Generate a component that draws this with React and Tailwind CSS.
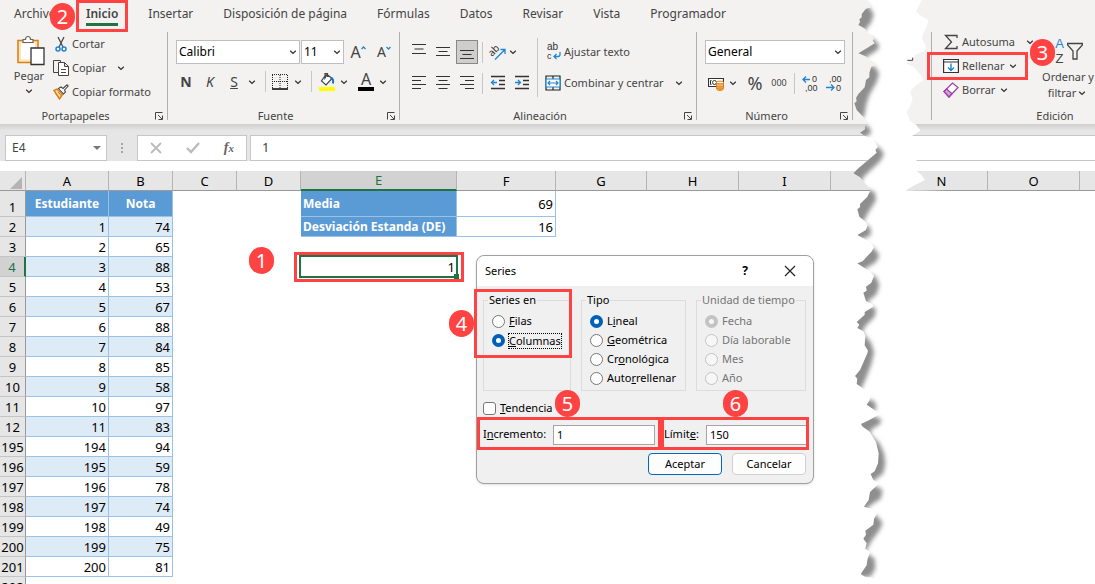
import React from "react";

const tabs = [
  "Archivo",
  "Inicio",
  "Insertar",
  "Disposición de página",
  "Fórmulas",
  "Datos",
  "Revisar",
  "Vista",
  "Programador",
];

const rows = [
  [1, null, null],
  [2, 1, 74],
  [3, 2, 65],
  [4, 3, 88],
  [5, 4, 53],
  [6, 5, 67],
  [7, 6, 88],
  [8, 7, 84],
  [9, 8, 85],
  [10, 9, 58],
  [11, 10, 97],
  [12, 11, 83],
  [195, 194, 94],
  [196, 195, 59],
  [197, 196, 78],
  [198, 197, 74],
  [199, 198, 49],
  [200, 199, 75],
  [201, 200, 81],
];

const Chevron = ({ className = "" }) => (
  <svg className={`w-3 h-3 shrink-0 ${className}`} viewBox="0 0 12 12" fill="none" stroke="#333" strokeWidth="1.3">
    <path d="M3.2 4.8 6 7.4 8.8 4.8" />
  </svg>
);

const Badge = ({ n, className }) => (
  <span
    className={`absolute z-20 flex items-center justify-center w-[25px] h-[27px] rounded-full bg-[#ff4343] text-white text-xl leading-none font-normal ${className}`}
  >
    {n}
  </span>
);

const Sep = ({ className = "" }) => <span className={`w-px h-[21px] shrink-0 bg-[#c8c6c4] ${className}`} />;

const GroupLine = () => <div className="w-px h-[88px] shrink-0 bg-[#b1afad]" />;

const Group = ({ title, className = "", launcher = true, children }) => (
  <section className={`flex flex-col h-[92px] shrink-0 text-[11px] ${className}`}>
    <div className="flex-1">{children}</div>
    <div className="flex items-center h-4">
      <span className="flex-1 text-center">{title}</span>
      {launcher && (
        <button aria-label={title} className="w-4 h-4 shrink-0">
          <svg viewBox="0 0 16 16" className="w-4 h-4" fill="none" stroke="#444" strokeWidth="1">
            <path d="M4.5 11.5v-7h7M7 7l4 4M11.5 7.5v4h-4" />
          </svg>
        </button>
      )}
    </div>
  </section>
);

const Combo = ({ label, value, className }) => (
  <label className={`relative block h-6 bg-white border border-[#c0bebc] text-xs text-black ${className}`}>
    <select aria-label={label} className="appearance-none w-full h-full pl-0.5 bg-transparent outline-none">
      <option>{value}</option>
    </select>
    <Chevron className="absolute right-0 top-[5px] pointer-events-none" />
  </label>
);

// the widths of the lines decide the alignment
const Lines = ({ d }) => (
  <svg className="w-4 h-4" viewBox="0 0 16 16" stroke="#333" strokeWidth="1.2" fill="none">
    <path d={d} />
  </svg>
);

const IconBtn = ({ label, className = "", children }) => (
  <button aria-label={label} className={`flex items-center justify-center w-[22px] h-6 shrink-0 ${className}`}>
    {children}
  </button>
);

const Clipboard = () => (
  <div className="flex">
    <button className="flex flex-col items-center w-8 ml-[13px] pt-[3px]">
      <svg className="w-8 h-8 shrink-0" viewBox="0 0 32 32" fill="none">
        <path d="M5 5.500h20v22H5z" fill="#fbe7b8" stroke="#e07b10" strokeWidth="1.500" />
        <path d="M8 8.500h14v16H8z" fill="#fff" />
        <path d="M10 7.500V4.500h2.500c0-4 5-4 5 0H20v3z" fill="#fff" stroke="#666" strokeWidth="1.200" />
        <path d="M18 13h13v16.500H18z" fill="#fff" stroke="#333" strokeWidth="1.300" />
      </svg>
      <span className="leading-4 mt-px">Pegar</span>
      <Chevron className="mt-px" />
    </button>
    <div className="flex flex-col ml-2">
      <button className="flex items-center gap-[3px] h-6">
        <svg className="w-4 h-4" viewBox="0 0 16 16" fill="none" strokeWidth="1.200">
          <path d="M5 1 10 11M11 1 6 11" stroke="#444" />
          <circle cx="5" cy="13" r="2" stroke="#1f85d0" strokeWidth="1.500" />
          <circle cx="11" cy="13" r="2" stroke="#1f85d0" strokeWidth="1.500" />
        </svg>
        Cortar
      </button>
      <button className="flex items-center gap-[3px] h-6">
        <svg className="w-4 h-4" viewBox="0 0 16 16" fill="none" stroke="#444">
          <path d="M5.500 12.500h-5V.5h7v2" />
          <path d="M5.500 2.500h6l4 4v9h-10zM11.500 2.500v4h4M8 9.500h5M8 12.500h5" fill="#fff" />
        </svg>
        Copiar
        <Chevron className="ml-1.5" />
      </button>
      <button className="flex items-center gap-[3px] h-6 whitespace-nowrap">
        <svg className="w-4 h-4" viewBox="0 0 16 16" fill="none">
          <path d="M1 6.500 4 5l5.500 5.500L6.500 15z" fill="#fcd9a0" stroke="#e07b10" strokeWidth="1.400" />
          <path d="M2.500 9.500 6 14M5 8l3.500 4" stroke="#e07b10" />
          <path d="M5.500 4.500 8 3l2 1.500L14 .8 15.200 2 11.500 6l1 2-2 2z" fill="#fff" stroke="#444" strokeWidth="1.100" />
        </svg>
        Copiar formato
      </button>
    </div>
  </div>
);

const FontGroup = () => (
  <>
    <div className="flex items-center pl-2 pt-2">
      <Combo label="Fuente" value="Calibri" className="w-[124px]" />
      <Combo label="Tamaño" value="11" className="w-[43px] ml-px" />
      <IconBtn label="Aumentar tamaño" className="ml-[3px]">
        <span className="text-base leading-5">A</span>
        <svg className="w-[5px] h-3 mb-2 shrink-0" viewBox="0 0 5 12" fill="none" stroke="#1f85d0" strokeWidth="1.300">
          <path d="M.5 7 2.500 5l2 2" />
        </svg>
      </IconBtn>
      <IconBtn label="Reducir tamaño" className="ml-1">
        <span className="text-sm leading-5">A</span>
        <svg className="w-[5px] h-3 mb-2 shrink-0" viewBox="0 0 5 12" fill="none" stroke="#1f85d0" strokeWidth="1.300">
          <path d="M.5 5l2 2 2-2" />
        </svg>
      </IconBtn>
    </div>
    <div className="flex items-center mt-[7px] pl-1.5 text-sm">
      <button className="w-6 font-bold">N</button>
      <button className="w-6 italic">K</button>
      <button className="w-6 underline">S</button>
      <Chevron />
      <Sep className="ml-[7px]" />
      <button aria-label="Bordes" className="ml-1.5">
        <svg className="w-4 h-4" viewBox="0 0 16 16" fill="none" stroke="#222">
          <path d="M.5 1v13M15.500 1v13M0 .5h16M8 1v13M0 7.500h16" strokeDasharray="1 1" />
          <path d="M0 15h16" stroke="#000" strokeWidth="1.500" />
        </svg>
      </button>
      <Chevron className="ml-1" />
      <Sep className="ml-[7px]" />
      <button aria-label="Color de relleno" className="ml-[7px]">
        <svg className="w-4 h-5" viewBox="0 0 16 20" fill="none">
          <path d="M7 2.500 2.500 9 7 13l6-6.500L8 2.500 6 6V1.500h2.500V5" stroke="#444" strokeWidth="1.200" fill="#fff" />
          <path d="M11 5.500c3 0 3.500 3 3 6" stroke="#1f75b8" strokeWidth="2" />
          <path d="M0 15h16v4H0z" fill="#ff0" />
        </svg>
      </button>
      <Chevron className="ml-[3px]" />
      <button aria-label="Color de fuente" className="flex flex-col items-center w-4 h-5 ml-2 text-base leading-[15px]">
        A
        <span className="w-4 h-1 bg-black" />
      </button>
      <Chevron className="ml-[3px]" />
    </div>
  </>
);

const AlignGroup = () => (
  <div className="flex">
    <div className="w-[137px] pt-2">
      <div className="flex items-center pl-2">
        <div className="flex gap-0.5">
          <IconBtn label="Arriba"><Lines d="M1 .5h14M3.500 5h9M1 9.500h14" /></IconBtn>
          <IconBtn label="Medio"><Lines d="M1 3.500h14M3.500 7.500h9M1 11.500h14" /></IconBtn>
          <IconBtn label="Abajo" className="bg-[#d0cecc] border border-[#8a8886]">
            <Lines d="M1 6.500h14M3.500 10.500h9M1 14.500h14" />
          </IconBtn>
        </div>
        <Sep className="ml-1" />
        <button aria-label="Orientación" className="ml-[7px]">
          <svg className="w-4 h-4 overflow-visible" viewBox="0 0 16 16" fill="none">
            <text x="-1" y="10" transform="rotate(-45 4 8)" fontSize="10" fill="#333">ab</text>
            <path d="M5 15.500 15 5.500M10.500 5.500H15V10" stroke="#1f85d0" strokeWidth="1.300" />
          </svg>
        </button>
        <Chevron className="ml-px" />
      </div>
      <div className="flex items-center mt-[7px] pl-2">
        <div className="flex gap-0.5">
          <IconBtn label="Izquierda"><Lines d="M1 1.500h14M1 5.500h9M1 9.500h14M1 13.500h9" /></IconBtn>
          <IconBtn label="Centro"><Lines d="M1 1.500h14M3.500 5.500h9M1 9.500h14M3.500 13.500h9" /></IconBtn>
          <IconBtn label="Derecha"><Lines d="M1 1.500h14M6 5.500h9M1 9.500h14M6 13.500h9" /></IconBtn>
        </div>
        <Sep className="ml-1" />
        <div className="flex gap-0.5 ml-1">
          <IconBtn label="Reducir sangría">
            <svg className="w-4 h-4" viewBox="0 0 16 16" fill="none" strokeWidth="1.300">
              <path d="M1 1.500h14M9 5.500h6M9 9.500h6M1 13.500h14" stroke="#333" />
              <path d="M7 7.500H1.500M4 5 1.500 7.500 4 10" stroke="#1f85d0" />
            </svg>
          </IconBtn>
          <IconBtn label="Aumentar sangría">
            <svg className="w-4 h-4" viewBox="0 0 16 16" fill="none" strokeWidth="1.300">
              <path d="M1 1.500h14M9 5.500h6M9 9.500h6M1 13.500h14" stroke="#333" />
              <path d="M1 7.500h5.500M4 5l2.500 2.500L4 10" stroke="#1f85d0" />
            </svg>
          </IconBtn>
        </div>
      </div>
    </div>
    <span className="w-px h-[59px] mt-1.5 bg-[#c8c6c4]" />
    <div className="flex flex-col items-start gap-[7px] pl-[7px] pt-2">
      <button className="flex items-center gap-[3px] h-6">
        <svg className="w-4 h-5 font-['Liberation_Sans']" viewBox="0 0 16 20" fill="none">
          <text x="2" y="8" fontSize="10" fill="#333">ab</text>
          <text x="2" y="17" fontSize="9" fill="#333">c</text>
          <path d="M15 10v2.500c0 1.500-1 2-2 2H9M11.500 12 9 14.500l2.500 2.500" stroke="#1f85d0" strokeWidth="1.300" />
        </svg>
        Ajustar texto
      </button>
      <button className="flex items-center gap-[3px] h-6">
        <svg className="w-4 h-4" viewBox="0 0 16 16" fill="none">
          <path d="M1 1h14v14H1zM8 1v3M8 12v3" stroke="#222" strokeWidth="1.200" />
          <path d="M1 4h14v8H1z" fill="#fff" stroke="#1f85d0" strokeWidth="1.200" />
          <path d="M3 8h10M5 6 3 8l2 2M11 6l2 2-2 2" stroke="#1f85d0" strokeWidth="1.200" />
        </svg>
        Combinar y centrar
        <Chevron className="ml-1.5" />
      </button>
    </div>
  </div>
);

const NumberGroup = () => (
  <>
    <div className="pl-2 pt-2">
      <Combo label="Formato de número" value="General" className="w-[140px]" />
    </div>
    <div className="flex items-center mt-[7px] pl-[11px]">
      <button aria-label="Moneda">
        <svg className="w-4 h-4" viewBox="0 0 16 16" fill="none">
          <path d="M.5 3.500h15v8H.5z" stroke="#333" strokeWidth="1.200" fill="#fff" />
          <circle cx="6.500" cy="7.500" r="2" stroke="#333" />
          <path d="M3.500 5.500h-1v4h1" stroke="#333" />
          <path d="M8.500 7.500v6c0 2.500 7 2.500 7 0v-6z" fill="#f6b26b" stroke="#e07b10" />
          <ellipse cx="12" cy="7.500" rx="3.500" ry="1.400" fill="#fff" stroke="#e07b10" />
          <path d="M8.500 10.500c0 2 7 2 7 0M8.500 12.500c0 2 7 2 7 0" stroke="#e07b10" />
        </svg>
      </button>
      <Chevron className="ml-[3px]" />
      <button className="w-4 ml-2 flex justify-center text-lg leading-6">%</button>
      <button className="w-4 ml-2 flex justify-center text-[9px]">000</button>
      <Sep className="ml-[7px]" />
      <button aria-label="Aumentar decimales" className="ml-[7px]">
        <svg className="w-4 h-5 font-['Liberation_Sans']" viewBox="0 0 16 20" fill="none">
          <text x="10" y="9" fontSize="9" fill="#333">0</text>
          <text x="3" y="18" fontSize="9" fill="#333">,00</text>
          <path d="M8 6.500H1M4 3.500l-3 3 3 3" stroke="#1f85d0" strokeWidth="1.300" />
        </svg>
      </button>
      <button aria-label="Disminuir decimales" className="ml-2">
        <svg className="w-4 h-5 font-['Liberation_Sans']" viewBox="0 0 16 20" fill="none">
          <text x="3" y="9" fontSize="9" fill="#333">,00</text>
          <text x="10" y="18" fontSize="9" fill="#333">0</text>
          <path d="M0 14.500h8M5 11.500l3 3-3 3" stroke="#1f85d0" strokeWidth="1.300" />
        </svg>
      </button>
    </div>
  </>
);

const EditGroup = () => (
  <div className="relative flex">
    <div className="w-[108px] shrink-0">
      <button className="flex items-center gap-[3px] h-5 ml-[11px]">
        <svg className="w-4 h-4" viewBox="0 0 16 16" fill="none" stroke="#444" strokeWidth="1.300">
          <path d="M14 4V1.500H2.500L8.500 8l-6 6.500H14V12" />
        </svg>
        Autosuma
        <Chevron className="ml-1.5" />
      </button>
      <div className="relative">
        <button className="flex items-center gap-[3px] h-7 ml-[11px]">
          <svg className="w-4 h-4" viewBox="0 0 16 16" fill="none">
            <path d="M.6 1.500h14.800v13H.6zM.6 4h14.800" stroke="#333" strokeWidth="1.200" fill="#fff" />
            <path d="M8 5.500v7M5 9.500l3 3 3-3" stroke="#1f85d0" strokeWidth="1.400" />
          </svg>
          Rellenar
          <Chevron />
        </button>
        <span className="absolute -left-[5px] top-0 w-[101px] h-7 border-3 border-[#ff4343]" />
      </div>
      <button className="flex items-center gap-[3px] h-5 ml-[11px]">
        <svg className="w-4 h-4" viewBox="0 0 16 16" fill="none" stroke="#9b3fa5" strokeWidth="1.200">
          <path d="M1 9.500 9.500 1 15 5.500 6 15z" fill="#fff" />
          <path d="M1 9.500 3.500 7 9 11.500 6 15z" fill="#d79be0" />
        </svg>
        Borrar
        <Chevron />
      </button>
    </div>
    <button className="flex flex-col items-center w-14 pt-1">
      <span className="flex items-center h-[30px]">
        <span className="flex flex-col items-center w-3 text-[13px] leading-[15px] font-['Liberation_Sans']">
          <span className="text-[#1f85d0]">A</span>
          <span>Z</span>
        </span>
        <svg className="w-4 h-[30px] ml-px" viewBox="0 0 16 30" fill="none" stroke="#444" strokeWidth="1.300">
          <path d="M.6 7.500h14.800V9L10 15v8H6v-8L.6 9z" />
        </svg>
      </span>
      <span className="mt-[3px] leading-4 whitespace-nowrap">Ordenar y</span>
      <span className="flex items-center leading-4">
        filtrar
        <Chevron />
      </span>
    </button>
    <Badge n="3" className="left-[98px] top-[7px]" />
  </div>
);

const Ribbon = () => (
  <header className="bg-[#f3f2f1]">
    <nav className="relative flex gap-[30px] h-8 pl-[14px] pt-1 whitespace-nowrap">
      {tabs.map((t) => (
        <a
          key={t}
          href="#"
          className={`relative h-[22px] leading-5 ${t === "Inicio" ? "font-semibold border-b-3 border-[#217346]" : ""}`}
        >
          {t}
          {t === "Inicio" && (
            <span className="absolute -inset-x-[10px] -top-1 h-8 border-3 border-[#ff4343]" />
          )}
        </a>
      ))}
      <Badge n="2" className="left-[50px] top-[3px]" />
    </nav>
    <div className="flex items-start overflow-hidden">
      <Group title="Portapapeles" className="w-[167px]"><Clipboard /></Group>
      <GroupLine />
      <Group title="Fuente" className="w-[231px]"><FontGroup /></Group>
      <GroupLine />
      <Group title="Alineación" className="w-[296px]"><AlignGroup /></Group>
      <GroupLine />
      <Group title="Número" className="w-[155px]"><NumberGroup /></Group>
      <GroupLine />
      <div className="w-[78px] shrink-0" />
      <GroupLine />
      <Group title="Edición" className="w-[246px]" launcher={false}><EditGroup /></Group>
    </div>
  </header>
);

const FormulaBar = () => (
  <div className="bg-[#e6e6e6]">
    <div className="h-[11px] bg-linear-to-b from-[#cfcfcf] to-[#e6e6e6] to-60%" />
    <div className="flex items-stretch h-[26px] mb-[10px] pl-[5px]">
      <label className="flex items-center w-[102px] bg-white border border-[#c6c6c6] pl-1.5 pr-[5px]">
        <input aria-label="Cuadro de nombres" defaultValue="E4" className="w-full min-w-0 outline-none bg-transparent" />
        <svg className="w-2 h-2 shrink-0" viewBox="0 0 8 8"><path d="M0 2h8L4 6z" fill="#777" /></svg>
      </label>
      <div className="flex flex-col items-center justify-center gap-0.5 w-[30px]">
        <i className="w-0.5 h-0.5 bg-[#a6a6a6]" />
        <i className="w-0.5 h-0.5 bg-[#a6a6a6]" />
        <i className="w-0.5 h-0.5 bg-[#a6a6a6]" />
      </div>
      <div className="flex items-center justify-around w-[110px] bg-white border border-[#c6c6c6]">
        <button aria-label="Cancelar entrada">
          <svg className="w-3 h-3" viewBox="0 0 12 12" stroke="#bbb" strokeWidth="1.800"><path d="m1 1 10 10M11 1 1 11" /></svg>
        </button>
        <button aria-label="Introducir">
          <svg className="w-[14px] h-3" viewBox="0 0 14 12" fill="none" stroke="#bbb" strokeWidth="2.400"><path d="m1 6 4 4 8-9" /></svg>
        </button>
        <button aria-label="Insertar función" className="font-['Liberation_Serif'] italic font-bold text-sm leading-5 text-[#666]">
          f<span className="text-[11px]">x</span>
        </button>
      </div>
      <input
        aria-label="Barra de fórmulas"
        defaultValue="1"
        className="flex-1 min-w-0 ml-[3px] pl-[11px] bg-white border border-r-0 border-[#c6c6c6] text-[13px] outline-none"
      />
    </div>
  </div>
);

const colHead = "p-0 border-r border-b border-r-[#b4b4b4] border-b-[#999] font-normal text-center";
const blueHead = "p-0 bg-[#5b9bd5] border-r border-b border-[#9bc2e6] text-xs leading-4 text-white font-bold";

const Sheet = () => (
  <table className="w-full table-fixed border-separate border-spacing-0 text-[13px] leading-4 text-black">
    <colgroup>
      <col className="w-[26px]" />
      <col className="w-[83px]" />
      <col className="w-16" />
      <col className="w-16" />
      <col className="w-16" />
      <col className="w-[156px]" />
      <col className="w-[99px]" />
      <col className="w-[91px]" />
      <col className="w-[92px]" />
      <col className="w-[92px]" />
      <col className="w-[65px]" />
      <col className="w-[92px]" />
      <col className="w-[92px]" />
      <col />
    </colgroup>
    <thead>
      <tr className="h-5 bg-[#e6e6e6]">
        <th className={colHead}>
          <svg className="w-3 h-3 ml-[10px] mt-1" viewBox="0 0 12 12"><path d="M12 0v12H0z" fill="#b4b4b4" /></svg>
        </th>
        {["A", "B", "C", "D"].map((c) => <th key={c} className={colHead}>{c}</th>)}
        <th className="p-0 bg-[#d2d2d2] border-r border-r-[#b4b4b4] border-b-2 border-b-[#217346] font-normal text-[#217346]">E</th>
        {["F", "G", "H", "I", "", "N", "O"].map((c, i) => <th key={i} className={colHead}>{c}</th>)}
        <th className="p-0 border-b border-[#999]" />
      </tr>
    </thead>
    <tbody>
      {rows.map(([n, a, b], i) => (
        <tr key={n} className={n === 1 ? "h-[26px]" : "h-5"}>
          <th
            className={`p-0 pb-px align-bottom border-r border-b border-b-[#c4c4c4] font-normal text-center ${
              n === 4 ? "bg-[#d2d2d2] border-r-2 border-r-[#217346] text-[#217346]" : "bg-[#e6e6e6] border-r-[#999]"
            }`}
          >
            {n}
          </th>
          {n === 1 ? (
            <>
              <th className={blueHead}>Estudiante</th>
              <th className={blueHead}>Nota</th>
            </>
          ) : (
            [a, b].map((v, j) => (
              <td
                key={j}
                className={`p-0 pr-0.5 text-right border-r border-b border-[#9bc2e6] ${i % 2 ? "bg-[#ddebf7]" : "bg-white"}`}
              >
                {v}
              </td>
            ))
          )}
          <td className="p-0" />
          <td className="relative p-0">
            {n === 4 && <Badge n="1" className="left-3 -top-[10px]" />}
          </td>
          {n <= 2 ? (
            <>
              <th className={`${blueHead} text-left pl-0.5 whitespace-nowrap`}>
                {n === 1 ? "Media" : "Desviación Estanda (DE)"}
              </th>
              <td className="p-0 pr-0.5 text-right border-r border-b border-[#9bc2e6]">{n === 1 ? 69 : 16}</td>
            </>
          ) : (
            <>
              <td className="relative p-0 pr-0.5 text-right">
                {n === 4 && (
                  <>
                    1
                    <span className="absolute -left-0.5 -right-px -top-0.5 -bottom-px border-2 border-[#217346]" />
                    <span className="absolute -right-0.5 -bottom-0.5 w-[5px] h-[5px] bg-[#217346]" />
                    <span className="absolute -left-[7px] -right-[7px] -inset-y-[5px] border-3 border-[#ff4343]" />
                  </>
                )}
              </td>
              <td className="p-0" />
            </>
          )}
          <td className="p-0" colSpan="7" />
        </tr>
      ))}
      <tr className="h-5">
        <th className="p-0 bg-[#e6e6e6] border-r border-[#999] font-normal">202</th>
        <td colSpan="13" />
      </tr>
    </tbody>
  </table>
);

const Radio = ({ name, checked, disabled, focus, children }) => (
  <label className="flex items-center gap-1 h-[19px] pl-2">
    <input
      type="radio"
      name={name}
      defaultChecked={checked}
      disabled={disabled}
      className="appearance-none w-[13px] h-[13px] shrink-0 rounded-full border border-[#777] bg-white checked:border-4 checked:border-[#005fb8] disabled:border-[#c3c3c3] disabled:bg-[#f7f7f7] checked:disabled:border-[#c3c3c3]"
    />
    <span className={focus ? "outline-1 outline-dotted outline-black leading-[14px]" : ""}>{children}</span>
  </label>
);

const FieldBox = ({ title, className, children }) => (
  <fieldset className={`border border-[#dcdcdc] pt-[5px] pb-0.5 ${className}`}>
    <legend className="ml-1 px-px leading-[14px] whitespace-nowrap">{title}</legend>
    {children}
  </fieldset>
);

const SeriesDialog = () => (
  <form
    role="dialog"
    aria-label="Series"
    className="absolute left-[476px] top-[255px] z-10 w-[338px] rounded-lg border border-[#a0a0a0] bg-[#f0f0f0] text-[11px] text-black shadow-sm"
  >
    <div className="flex items-center h-[30px] pl-2 pr-[17px] rounded-t-lg bg-white">
      <span className="flex-1">Series</span>
      <button type="button" className="font-bold text-xs mr-9">?</button>
      <button type="button" aria-label="Cerrar">
        <svg className="w-3 h-3" viewBox="0 0 12 12" stroke="#222" strokeWidth="1.200"><path d="m1 1 10 10M11 1 1 11" /></svg>
      </button>
    </div>
    <div className="pl-1.5 pr-[7px] pt-[7px] pb-2">
      <div className="flex gap-[10px]">
        <FieldBox title="Series en" className="w-[88px]">
          <Radio name="en"><u>F</u>ilas</Radio>
          <Radio name="en" checked focus><u>C</u>olumnas</Radio>
        </FieldBox>
        <FieldBox title="Tipo" className="w-[105px]">
          <Radio name="tipo" checked>L<u>i</u>neal</Radio>
          <Radio name="tipo"><u>G</u>eométrica</Radio>
          <Radio name="tipo">Cr<u>o</u>nológica</Radio>
          <Radio name="tipo">Auto<u>r</u>rellenar</Radio>
        </FieldBox>
        <FieldBox title="Unidad de tiempo" className="flex-1 text-[#757575]">
          <Radio name="unidad" checked disabled>Fecha</Radio>
          <Radio name="unidad" disabled>Día laborable</Radio>
          <Radio name="unidad" disabled>Mes</Radio>
          <Radio name="unidad" disabled>Año</Radio>
        </FieldBox>
      </div>
      <label className="flex items-center gap-1 h-[17px] mt-[9px]">
        <input type="checkbox" className="appearance-none w-[13px] h-[13px] rounded-[3px] border border-[#777] bg-white" />
        <span><u>T</u>endencia</span>
      </label>
      <div className="flex -ml-1.5 -mr-[3px]">
        <label className="flex items-center w-[184px] shrink-0 h-[33px] pl-[3px] pt-0.5 border-3 border-[#ff4343]">
          <span className="w-[70px] shrink-0">I<u>n</u>cremento:</span>
          <input defaultValue="1" className="w-[102px] h-5 pl-[3px] bg-white border border-[#a3a3a8] outline-none" />
        </label>
        <label className="flex items-center flex-1 min-w-0 h-[33px] pt-0.5 border-3 border-[#ff4343]">
          <span className="w-[42px] shrink-0">Límit<u>e</u>:</span>
          <input defaultValue="150" className="flex-1 min-w-0 h-5 pl-[3px] bg-white border border-r-0 border-[#a3a3a8] outline-none" />
        </label>
      </div>
      <div className="flex justify-end gap-[10px] mt-[3px]">
        <button type="button" className="w-[74px] h-[22px] rounded bg-[#fdfdfd] border border-[#0067c0]">Aceptar</button>
        <button type="button" className="w-[74px] h-[22px] rounded bg-[#fdfdfd] border border-[#d0d0d0]">Cancelar</button>
      </div>
    </div>
    <span className="absolute -left-[3px] top-[33px] w-[98px] h-[69px] border-3 border-[#ff4343] pointer-events-none" />
    <Badge n="4" className="-left-[28px] top-[54px]" />
    <Badge n="5" className="left-[78px] top-[134px]" />
    <Badge n="6" className="left-[246px] top-[134px]" />
  </form>
);

// torn strip: everything right of the left edge is blank paper, with a soft shadow cast on it
const leftEdge =
  "112,0 124,22 108,26 95,42 95,52 88,58 90,66 85,75 95,80 105,86 112,97 122,108 132,114 128,122 134,130 110,145 85,160 105,168 118,178 142,194 124,200 118,218 118,232 108,240 104,262 85,282 78,294 80,304 73,310 80,330 95,346 112,362 116,372 105,378 105,388 90,398 105,408 126,414 144,440 136,450 140,458 110,484 85,505 70,520 90,532 105,550 122,570 112,590 90,612 90,622 82,628 88,650 105,664 113,674 108,690 82,705 100,715 120,727 132,742 124,756 110,770 98,784 82,790 100,802 120,814 132,828 124,848 108,860 110,872 100,878 108,904 128,912 130,920 104,936 104,944 80,966 88,974 82,984 100,994 106,1008 104,1036 114,1052 112,1060 98,1092 90,1110 75,1128 82,1136 80,1152 106,1170 122,1188 118,1202 110,1214 130,1228 148,1243 118,1260 93,1272 98,1280 118,1294 138,1326 146,1360 144,1390 134,1414 122,1422 130,1440 148,1450 120,1476 116,1500 102,1520 122,1526 142,1540 132,1556 130,1574 106,1592 108,1604 100,1616 110,1630 106,1646 120,1656 112,1680 110,1696 92,1722 105,1730 126,1733 126,1752";
const rightEdge =
  "275,0 258,35 270,45 295,60 290,80 280,100 275,115 287,138 285,152 255,165 248,178 228,190 250,200 270,222 280,240 255,258 240,275 248,295 240,320 230,335 240,362 258,374 272,392 250,405 238,415 255,430 245,455 260,480 255,510 275,525 285,540 255,555 228,571 390,574";
const shadowEdge =
  "80,0 114,16 131,42 124,66 104,92 96,106 130,116 148,136 142,150 108,172 100,184 136,202 147,220 140,246 118,284 108,316 104,344 90,368 118,380 124,400 96,416 134,434 152,446 162,462 150,484 120,512 98,534 90,560 134,576 138,600 118,632 98,668 122,684 122,706 86,722 132,744 148,766 138,786 96,812 138,830 148,854 140,882 110,908 138,928 134,950 108,976 96,996 122,1026 132,1056 124,1092 108,1134 94,1166 76,1186 134,1204 140,1226 116,1243 154,1258 150,1272 124,1288 120,1302 148,1330 162,1360 166,1390 160,1420 122,1450 158,1470 152,1496 124,1514 102,1534 142,1548 158,1570 146,1594 126,1620 106,1656 134,1676 136,1704 124,1728 64,1742";

const Tear = () => (
  <svg className="absolute left-[830px] top-0 w-[130px] h-[584px] pointer-events-none" viewBox="0 0 390 1752">
    <defs>
      <clipPath id="gap">
        <polygon points={`${leftEdge} 390,1752 390,0`} />
      </clipPath>
      <filter id="soft" x="-20%" y="-5%" width="140%" height="110%">
        <feGaussianBlur stdDeviation="6" />
      </filter>
    </defs>
    <polygon points={`${leftEdge} 390,1752 ${rightEdge.split(" ").reverse().join(" ")}`} fill="#fff" />
    <g clipPath="url(#gap)">
      <polygon points={`0,0 ${shadowEdge} 0,1752`} fill="#8e8e8e" filter="url(#soft)" />
    </g>
    <path d="M232 181h16v-8" fill="none" stroke="#444" strokeWidth="3" />
  </svg>
);

export default function App() {
  return (
    <div className="relative h-screen overflow-hidden bg-white font-['Noto_Sans',sans-serif] text-xs text-[#444]">
      <Ribbon />
      <FormulaBar />
      <Sheet />
      <Tear />
      <SeriesDialog />
    </div>
  );
}
